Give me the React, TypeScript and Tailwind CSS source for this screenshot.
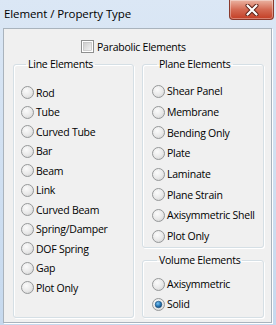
import React from "react";

const FONT = { fontFamily: '"Open Sans", "Noto Sans", sans-serif' };

function Radio({ checked = false }: { checked?: boolean }) {
  return (
    <svg width="13" height="13" viewBox="0 0 13 13" className="shrink-0">
      <defs>
        <radialGradient id="rfill" cx="0.4" cy="0.35" r="0.75">
          <stop offset="0" stopColor="#fbfbfb" />
          <stop offset="0.6" stopColor="#e8e8e8" />
          <stop offset="1" stopColor="#d2d2d2" />
        </radialGradient>
        <radialGradient id="rdot" cx="0.4" cy="0.35" r="0.7">
          <stop offset="0" stopColor="#7cc4f2" />
          <stop offset="0.55" stopColor="#2a7ab8" />
          <stop offset="1" stopColor="#0d3f6e" />
        </radialGradient>
      </defs>
      <circle cx="6.5" cy="6.5" r="6" fill="url(#rfill)" stroke="#969899" strokeWidth="1" />
      {checked && (
        <circle cx="6.5" cy="6.5" r="3.3" fill="url(#rdot)" stroke="#1b4d7a" strokeWidth="0.6" />
      )}
    </svg>
  );
}

function Checkbox() {
  return (
    <svg width="13" height="13" viewBox="0 0 13 13" className="shrink-0">
      <defs>
        <linearGradient id="cfill" x1="0" y1="0" x2="1" y2="1">
          <stop offset="0" stopColor="#cbcbcb" />
          <stop offset="1" stopColor="#f4f4f4" />
        </linearGradient>
      </defs>
      <rect x="0.5" y="0.5" width="12" height="12" fill="#ffffff" stroke="#8e8f8f" />
      <rect x="2.5" y="2.5" width="8" height="8" fill="url(#cfill)" stroke="#b5b5b5" strokeWidth="0.6" />
    </svg>
  );
}

function Item({ label, checked = false, h }: { label: string; checked?: boolean; h: string }) {
  return (
    <div className={`flex items-center gap-[2px] ${h}`}>
      <Radio checked={checked} />
      <span className="text-[10.5px] leading-[14px] tracking-[-0.25px] text-black whitespace-nowrap">{label}</span>
    </div>
  );
}

function Legend({ children }: { children: React.ReactNode }) {
  return (
    <legend className="ml-[5px] px-[2px] text-[10.5px] leading-[16px] tracking-[-0.25px] text-black">{children}</legend>
  );
}

function CloseButton() {
  return (
    <div className="w-[45px] h-[20px] rounded-b-[4px] border border-t-0 border-[#8a3a2c] bg-gradient-to-b from-[#eab3a2] via-[#d46a53] to-[#c33c22] shadow-[inset_0_0_0_1px_rgba(255,255,255,0.35)] flex items-center justify-center">
      <svg width="16" height="12" viewBox="0 0 16 12">
        <path d="M3.5 1.5 L12.5 10.5 M12.5 1.5 L3.5 10.5" stroke="#5a2016" strokeWidth="4" strokeLinecap="round" />
        <path d="M3.5 1.5 L12.5 10.5 M12.5 1.5 L3.5 10.5" stroke="#ffffff" strokeWidth="2.2" strokeLinecap="round" />
      </svg>
    </div>
  );
}

export default function App() {
  const line = [
    "Rod",
    "Tube",
    "Curved Tube",
    "Bar",
    "Beam",
    "Link",
    "Curved Beam",
    "Spring/Damper",
    "DOF Spring",
    "Gap",
    "Plot Only",
  ];
  const plane = [
    "Shear Panel",
    "Membrane",
    "Bending Only",
    "Plate",
    "Laminate",
    "Plane Strain",
    "Axisymmetric Shell",
    "Plot Only",
  ];
  return (
    <div className="w-[276px] h-[325px] overflow-hidden flex flex-col bg-gradient-to-b from-[#dbe7f5] to-[#c6d9ee]" style={FONT}>
      {/* Title bar */}
      <div className="h-[28px] flex items-start justify-between shrink-0">
        <div className="pl-[4px] pt-[6px] text-[11.5px] leading-[16px] tracking-[-0.1px] text-black">Element / Property Type</div>
        <div className="mr-[2px]">
          <CloseButton />
        </div>
      </div>
      {/* Client */}
      <div className="flex-1 ml-[3px] mr-[4px] mb-[2px] bg-[#f0f0f0] border border-[#a9b3bd] shadow-[1px_1px_0_#ffffff] flex flex-col">
        <div className="mt-[11px] ml-[77px] h-[13px] flex items-center gap-[3px]">
          <Checkbox />
          <span className="text-[10.5px] leading-[14px] tracking-[-0.25px] text-black whitespace-nowrap">Parabolic Elements</span>
        </div>
        <div className="mt-[3px] ml-[9px] flex gap-[8px] items-start">
          <fieldset className="w-[121px] h-[262px] border border-[#d5dfe5] rounded-[3px] shadow-[inset_1px_1px_0_#ffffff,1px_1px_0_#ffffff] pl-[7px] pt-[11px]">
            <Legend>Line Elements</Legend>
            <div className="flex flex-col">
              {line.map((l) => (
                <Item key={l} label={l} h="h-[19.5px]" />
              ))}
            </div>
          </fieldset>
          <div className="flex flex-col gap-[4px]">
            <fieldset className="w-[122px] h-[192px] border border-[#d5dfe5] rounded-[3px] shadow-[inset_1px_1px_0_#ffffff,1px_1px_0_#ffffff] pl-[9px] pt-[9px]">
              <Legend>Plane Elements</Legend>
              <div className="flex flex-col">
                {plane.map((l) => (
                  <Item key={l} label={l} h="h-[20.7px]" />
                ))}
              </div>
            </fieldset>
            <fieldset className="w-[122px] h-[66px] border border-[#d5dfe5] rounded-[3px] shadow-[inset_1px_1px_0_#ffffff,1px_1px_0_#ffffff] pl-[9px] pt-[6px]">
              <Legend>Volume Elements</Legend>
              <div className="flex flex-col">
                <Item label="Axisymmetric" h="h-[20px]" />
                <Item label="Solid" checked h="h-[20px]" />
              </div>
            </fieldset>
          </div>
        </div>
      </div>
    </div>
  );
}
